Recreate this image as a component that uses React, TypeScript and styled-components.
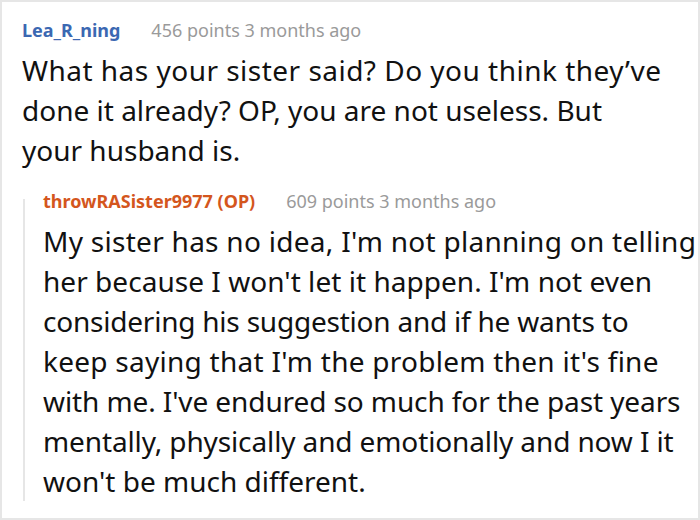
import React from 'react'
import styled, { createGlobalStyle } from 'styled-components'

const GlobalStyle = createGlobalStyle`
  html, body {
    margin: 0;
    padding: 0;
    background: #ffffff;
  }
  body {
    font-family: 'Noto Sans', 'Open Sans', sans-serif;
  }
`

const Frame = styled.div`
  box-sizing: border-box;
  width: 700px;
  height: 520px;
  border: 2px solid #e6e6e6;
  padding: 16px 0 0 20px;
  overflow: hidden;
  background: #fff;
`

const Meta = styled.div`
  display: flex;
  align-items: baseline;
  gap: 31px;
  line-height: 24px;
  font-size: 18px;
  white-space: nowrap;
`

const Author = styled.span<{ $op?: boolean }>`
  font-weight: 700;
  color: ${(p) => (p.$op ? '#d4561d' : '#3b68b2')};
`

const Points = styled.span`
  color: #9a9a9a;
`

const Body = styled.div<{ $gap: number }>`
  font-size: 28px;
  line-height: 40px;
  color: #111;
  margin-top: ${(p) => p.$gap}px;
`

const Line = styled.div<{ $squeeze?: number }>`
  white-space: nowrap;
  letter-spacing: ${(p) => p.$squeeze ?? 0}px;
`

const Reply = styled.div`
  position: relative;
  margin: 19px 0 0 1px;
  padding-left: 20px;

  &::before {
    content: '';
    position: absolute;
    left: 0;
    top: 10px;
    bottom: 0;
    width: 2px;
    background: #e6e6e6;
  }
`

interface ILine {
  text: string
  squeeze?: number
}

interface IComment {
  author: string
  meta: string
  lines: ILine[]
}

const parent: IComment = {
  author: 'Lea_R_ning',
  meta: '456 points 3 months ago',
  lines: [
    { text: 'What has your sister said? Do you think they\u2019ve', squeeze: 0.48 },
    { text: 'done it already? OP, you are not useless. But' },
    { text: 'your husband is.' }
  ]
}

const child: IComment = {
  author: 'throwRASister9977 (OP)',
  meta: '609 points 3 months ago',
  lines: [
    { text: "My sister has no idea, I'm not planning on telling", squeeze: 0.28 },
    { text: "her because I won't let it happen. I'm not even", squeeze: 0.04 },
    { text: 'considering his suggestion and if he wants to', squeeze: -0.22 },
    { text: "keep saying that I'm the problem then it's fine", squeeze: 0.26 },
    { text: "with me. I've endured so much for the past years", squeeze: -0.1 },
    { text: 'mentally, physically and emotionally and now I it', squeeze: -0.12 },
    { text: "won't be much different.", squeeze: 0 }
  ]
}

const App = (): JSX.Element => {
  return (
    <>
      <GlobalStyle />
      <Frame>
        <Meta>
          <Author>{parent.author}</Author>
          <Points>{parent.meta}</Points>
        </Meta>
        <Body $gap={8}>
          {parent.lines.map((l) => (
            <Line key={l.text} $squeeze={l.squeeze}>{l.text}</Line>
          ))}
        </Body>
        <Reply>
          <Meta>
            <Author $op>{child.author}</Author>
            <Points>{child.meta}</Points>
          </Meta>
          <Body $gap={8}>
            {child.lines.map((l) => (
              <Line key={l.text} $squeeze={l.squeeze}>{l.text}</Line>
            ))}
          </Body>
        </Reply>
      </Frame>
    </>
  )
}

export default App
